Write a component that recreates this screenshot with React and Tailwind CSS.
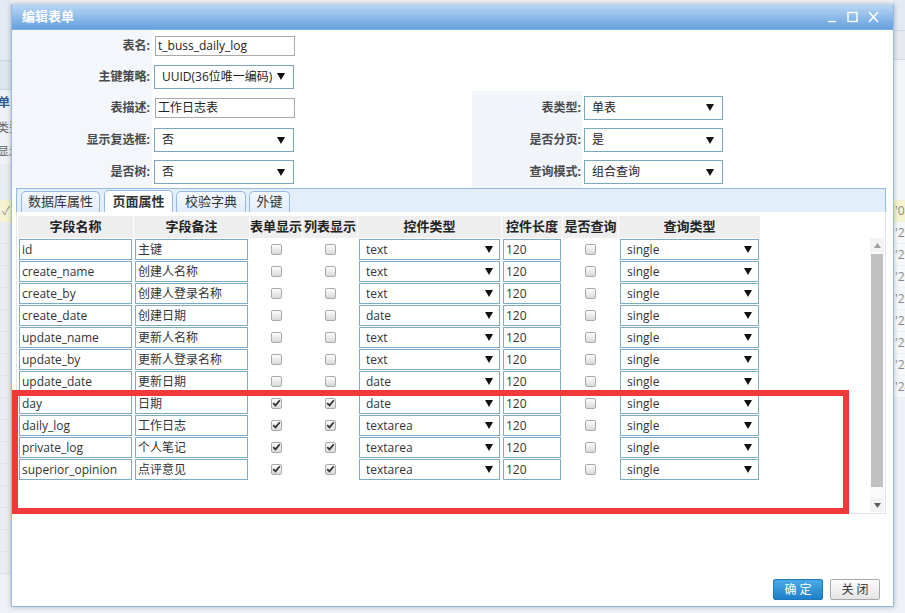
import React from "react";

const rows = [
  ["id", "主键", "text", false],
  ["create_name", "创建人名称", "text", false],
  ["create_by", "创建人登录名称", "text", false],
  ["create_date", "创建日期", "date", false],
  ["update_name", "更新人名称", "text", false],
  ["update_by", "更新人登录名称", "text", false],
  ["update_date", "更新日期", "date", false],
  ["day", "日期", "date", true],
  ["daily_log", "工作日志", "textarea", true],
  ["private_log", "个人笔记", "textarea", true],
  ["superior_opinion", "点评意见", "textarea", true],
];

const Arrow = () => (
  <svg width="8" height="7" viewBox="0 0 8 7" className="shrink-0">
    <path d="M0 0H8L4 7Z" fill="#111" />
  </svg>
);

const Check = ({ on }) => (
  <span className="w-[11px] h-[11px] rounded-[2px] border border-[#a9a9a9] bg-linear-to-b from-[#fdfdfd] to-[#d9d9d9] flex items-center justify-center">
    {on && (
      <svg width="9" height="8" viewBox="0 0 9 8">
        <path d="M1.2 4.2 L3.5 6.4 L7.8 1.2" stroke="#333" strokeWidth="1.8" fill="none" />
      </svg>
    )}
  </span>
);

const FormSelect = ({ text, w }) => (
  <div className={`h-[24px] ${w} bg-white border border-[#7ba6bd] flex items-center pl-[7px] pr-[8px] text-[12px] text-[#222]`}>
    <span className="flex-1 overflow-hidden whitespace-nowrap">{text}</span>
    <Arrow />
  </div>
);

const FormInput = ({ text }) => (
  <div className="h-[20px] w-[140px] bg-white border border-[#a9a9a9] flex items-center pl-[2px] text-[12px] text-[#222] whitespace-nowrap">
    {text}
  </div>
);

const Label = ({ children }) => (
  <span className="text-[12px] font-bold text-[#4a4a4a]">{children}</span>
);

const CellInput = ({ text }) => (
  <div className="px-[1px]">
    <div className="h-[21px] bg-white border border-[#7eabc4] flex items-center pl-[2px] text-[12px] text-[#333] whitespace-nowrap overflow-hidden">
      {text}
    </div>
  </div>
);

const CellSelect = ({ text }) => (
  <div className="px-[1px]">
    <div className="h-[21px] bg-white border border-[#7eabc4] flex items-center pl-[6px] pr-[6px] text-[12px] text-[#333]">
      <span className="flex-1">{text}</span>
      <Arrow />
    </div>
  </div>
);

const CellCheck = ({ on }) => (
  <div className="h-[21px] flex items-center justify-center pb-[1px]">
    <Check on={on} />
  </div>
);

const headers = ["字段名称", "字段备注", "表单显示", "列表显示", "控件类型", "控件长度", "是否查询", "查询类型"];

export default function App() {
  return (
    <div className="relative w-[905px] h-[613px] overflow-hidden bg-[#eef2f6] font-['Open_Sans','Noto_Sans_CJK_SC',sans-serif]">
      {/* background application (partly visible) */}
      <div className="flex h-full">
        <div className="w-[11px] flex flex-col text-[12px] overflow-hidden">
          <div className="h-[60px] bg-[#e3eaf2]" />
          <div className="h-[30px] bg-[#dde5ee] border-y border-[#c9d5e2]" />
          <div className="h-[26px] flex items-center font-bold text-[#2f5b8c] whitespace-nowrap -ml-[2px]">单</div>
          <div className="h-[24px] flex items-center text-[#666] whitespace-nowrap -ml-[3px]">类型</div>
          <div className="h-[24px] flex items-center text-[#666] whitespace-nowrap -ml-[3px]">显示</div>
          <div className="h-[36px] bg-[#e8edf2]" />
          <div className="h-[22px] bg-[#f6f3d4] flex items-center text-[#999] pl-[2px]">✓</div>
          {Array.from({ length: 16 }).map((_, i) => (
            <div key={i} className="h-[22px] border-b border-[#dde3ea] bg-[#e9edf2]" />
          ))}
        </div>
        <div className="flex-1" />
        <div className="w-[12px] flex flex-col text-[12px] text-[#8a8a8a] overflow-hidden">
          <div className="h-[30px] bg-[#e3eaf2]" />
          <div className="h-[30px] bg-[#e6e9ee] border-y border-[#d0d8e2]" />
          <div className="h-[140px] bg-[#f3f5f8]" />
          <div className="h-[22px] bg-[#f5f3d2] flex items-center pl-[2px] whitespace-nowrap">'08</div>
          {["'29", "'29", "'29", "'29", "'29", "'29", "'24", "'24"].map((t, i) => (
            <div key={i} className="h-[22px] flex items-center pl-[2px] whitespace-nowrap border-b border-[#eceff3] bg-[#f7f8fa]">
              {t}
            </div>
          ))}
        </div>
      </div>

      {/* dialog */}
      <div className="absolute left-[11px] top-[4px] w-[883px] h-[603px] flex flex-col bg-white border border-t-0 border-[#95b8e7] shadow-[0_0_5px_rgba(0,0,0,0.25)]">
        {/* title bar */}
        <div className="h-[26px] shrink-0 flex items-center pl-[10px] pr-[14px] bg-linear-to-b from-[#bcd8f4] to-[#64a0de] border-b border-[#7fb0e3]">
          <span className="text-[13px] font-bold text-white">编辑表单</span>
          <div className="flex-1" />
          <div className="flex items-center gap-[10px]">
            <svg width="9" height="12" viewBox="0 0 9 12">
              <path d="M0 10.5H8" stroke="white" strokeWidth="1.4" />
            </svg>
            <svg width="11" height="12" viewBox="0 0 11 12">
              <rect x="1" y="1.5" width="9" height="9" stroke="white" strokeWidth="1.4" fill="none" />
            </svg>
            <svg width="11" height="12" viewBox="0 0 11 12">
              <path d="M1 1L10 11M10 1L1 11" stroke="white" strokeWidth="1.5" />
            </svg>
          </div>
        </div>

        {/* form */}
        <div className="flex flex-col shrink-0">
          <div className="flex h-[32px]">
            <div className="w-[140px] bg-[#f3f6fa] flex items-center justify-end pr-[2px]"><Label>表名:</Label></div>
            <div className="w-[320px] flex items-center pl-[3px]"><FormInput text="t_buss_daily_log" /></div>
          </div>
          <div className="flex h-[29px]">
            <div className="w-[140px] bg-[#f3f6fa] flex items-center justify-end pr-[2px]"><Label>主键策略:</Label></div>
            <div className="w-[320px] flex items-center pl-[2px]"><FormSelect text="UUID(36位唯一编码)" w="w-[140px]" /></div>
          </div>
          <div className="flex h-[33px]">
            <div className="w-[140px] bg-[#f3f6fa] flex items-center justify-end pr-[2px]"><Label>表描述:</Label></div>
            <div className="w-[320px] flex items-center pl-[3px]"><FormInput text="工作日志表" /></div>
            <div className="w-[110px] bg-[#f1f5f9] flex items-center justify-end pr-[1px]"><Label>表类型:</Label></div>
            <div className="w-[151px] flex items-center pl-[2px]"><FormSelect text="单表" w="w-[139px]" /></div>
          </div>
          <div className="flex h-[32px]">
            <div className="w-[140px] bg-[#f3f6fa] flex items-center justify-end pr-[2px]"><Label>显示复选框:</Label></div>
            <div className="w-[320px] flex items-center pl-[2px]"><FormSelect text="否" w="w-[140px]" /></div>
            <div className="w-[110px] bg-[#f1f5f9] flex items-center justify-end pr-[1px]"><Label>是否分页:</Label></div>
            <div className="w-[151px] flex items-center pl-[2px]"><FormSelect text="是" w="w-[139px]" /></div>
          </div>
          <div className="flex h-[32px]">
            <div className="w-[140px] bg-[#f3f6fa] flex items-center justify-end pr-[2px]"><Label>是否树:</Label></div>
            <div className="w-[320px] flex items-center pl-[2px]"><FormSelect text="否" w="w-[140px]" /></div>
            <div className="w-[110px] bg-[#f1f5f9] flex items-center justify-end pr-[1px]"><Label>查询模式:</Label></div>
            <div className="w-[151px] flex items-center pl-[2px]"><FormSelect text="组合查询" w="w-[139px]" /></div>
          </div>
        </div>

        {/* tabs */}
        <div className="ml-[4px] w-[870px] h-[24px] shrink-0 flex items-end pl-[4px] border border-b-0 border-[#95b8e7] bg-[#e3eefb] text-[13px] text-[#333]">
          <div className="w-[79px] h-[21px] flex items-center justify-center rounded-t-[5px] border border-b-0 border-[#95b8e7] bg-linear-to-b from-[#f3f8ff] to-[#e2edfc]">数据库属性</div>
          <div className="ml-[4px] w-[69px] h-[22px] flex items-center justify-center rounded-t-[5px] border border-b-0 border-[#95b8e7] bg-white font-bold">页面属性</div>
          <div className="ml-[3px] w-[70px] h-[21px] flex items-center justify-center rounded-t-[5px] border border-b-0 border-[#95b8e7] bg-linear-to-b from-[#f3f8ff] to-[#e2edfc]">校验字典</div>
          <div className="ml-[3px] w-[41px] h-[21px] flex items-center justify-center rounded-t-[5px] border border-b-0 border-[#95b8e7] bg-linear-to-b from-[#f3f8ff] to-[#e2edfc]">外键</div>
        </div>

        {/* panel */}
        <div className="ml-[4px] w-[870px] h-[302px] shrink-0 flex border border-t-0 border-[#e2e6ea]">
          <div className="flex-1 pl-[1px] pt-[4px]">
            <div className="grid grid-cols-[115px_115px_52px_54px_143px_60px_55px_141px] gap-x-[1px] gap-y-[1px] w-max">
              {headers.map((h) => (
                <div key={h} className="h-[22px] bg-[#eeeeee] flex items-center justify-center text-[13px] font-bold text-[#222] whitespace-nowrap">
                  {h}
                </div>
              ))}
              {rows.map(([name, note, type, on]) => (
                <React.Fragment key={name}>
                  <CellInput text={name} />
                  <CellInput text={note} />
                  <CellCheck on={on} />
                  <CellCheck on={on} />
                  <CellSelect text={type} />
                  <CellInput text="120" />
                  <CellCheck on={false} />
                  <CellSelect text="single" />
                </React.Fragment>
              ))}
            </div>
          </div>
          {/* scrollbar */}
          <div className="mr-[1px] mt-[26px] w-[14px] h-[274px] flex flex-col bg-[#fafafa]">
            <div className="h-[14px] flex items-center justify-center bg-[#f3f3f3]">
              <svg width="7" height="5" viewBox="0 0 7 5"><path d="M0 5H7L3.5 0Z" fill="#a0a0a0" /></svg>
            </div>
            <div className="mt-[2px] mx-[1px] h-[233px] bg-[#c1c1c1]" />
            <div className="flex-1" />
            <div className="h-[14px] flex items-center justify-center bg-[#f3f3f3]">
              <svg width="7" height="5" viewBox="0 0 7 5"><path d="M0 0H7L3.5 5Z" fill="#606060" /></svg>
            </div>
          </div>
        </div>

        {/* footer */}
        <div className="flex-1" />
        <div className="flex justify-end gap-[7px] pr-[13px] pb-[6px]">
          <div className="w-[50px] h-[21px] flex items-center justify-center rounded-[2px] border border-[#1f78b9] bg-linear-to-b from-[#4aaae6] to-[#1c80c8] text-[12px] text-white tracking-[3px] pl-[3px]">
            确定
          </div>
          <div className="w-[50px] h-[21px] flex items-center justify-center rounded-[2px] border border-[#a8a8a8] bg-linear-to-b from-[#fdfdfd] to-[#e4e4e4] text-[12px] text-[#333] tracking-[3px] pl-[3px]">
            关闭
          </div>
        </div>
      </div>

      {/* red annotation box */}
      <div className="absolute left-[12px] top-[390px] w-[837px] h-[124px] border-[6px] border-[#f03a3a]" />
    </div>
  );
}
